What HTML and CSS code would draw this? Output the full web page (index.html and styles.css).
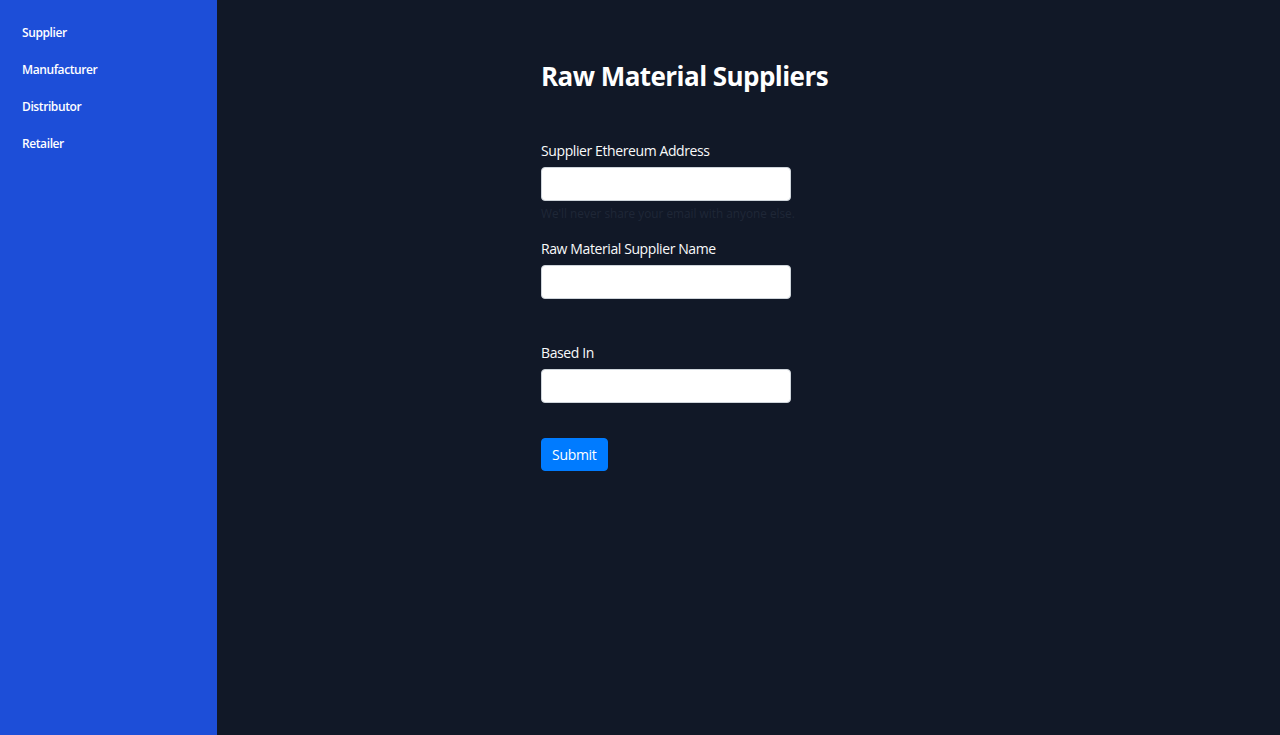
FILE: index.html
```html
<!DOCTYPE html>
<html lang="en">
<head>
<meta charset="utf-8">
<title>Raw Material Suppliers</title>
<link rel="stylesheet" href="styles.css">
</head>
<body>
<div class="layout">
  <nav class="sidebar">
    <a class="nav-link" href="#">Supplier</a>
    <a class="nav-link" href="#">Manufacturer</a>
    <a class="nav-link" href="#">Distributor</a>
    <a class="nav-link" href="#">Retailer</a>
  </nav>
  <main class="main">
    <div class="content">
      <h1 class="title">Raw Material Suppliers</h1>
      <form class="form">
        <div class="group">
          <label class="label">Supplier Ethereum Address</label>
          <input class="input" type="text">
          <small class="help">We'll never share your email with anyone else.</small>
        </div>
        <div class="group group-tall">
          <label class="label">Raw Material Supplier Name</label>
          <input class="input" type="text">
        </div>
        <div class="group group-btn">
          <label class="label">Based In</label>
          <input class="input" type="text">
        </div>
        <button class="btn" type="button">Submit</button>
      </form>
    </div>
  </main>
</div>
</body>
</html>
```

FILE: styles.css
```css
* { box-sizing: border-box; }
html, body { margin: 0; padding: 0; height: 100%; }
body {
  font-family: "Open Sans", "Noto Sans", "Liberation Sans", sans-serif;
  background: #111827;
  color: #f9fafb;
}
.layout {
  display: flex;
  min-height: 735px;
}
.sidebar {
  width: 217px;
  flex-shrink: 0;
  background: #1d4ed8;
  display: flex;
  flex-direction: column;
  padding: 24px 0 0 22px;
  gap: 19px;
}
.nav-link {
  color: #ffffff;
  text-decoration: none;
  font-size: 12px;
  font-weight: 600;
  line-height: 18px;
  letter-spacing: -0.4px;
}
.main {
  flex: 1;
  padding-left: 324px;
}
.content {
  width: 320px;
}
.title {
  margin: 58px 0 0 0;
  font-size: 26px;
  font-weight: 700;
  line-height: 36px;
  letter-spacing: -0.55px;
  color: #ffffff;
  white-space: nowrap;
}
.form {
  margin-top: 46px;
  display: flex;
  flex-direction: column;
}
.group {
  display: flex;
  flex-direction: column;
  margin-bottom: 16px;
}
.group-tall { margin-bottom: 43px; }
.group-btn { margin-bottom: 35px; }
.label {
  font-size: 14px;
  line-height: 21px;
  margin-bottom: 6px;
  letter-spacing: -0.4px;
  color: #f9fafb;
}
.input {
  width: 250px;
  height: 34px;
  border: 1px solid #ced4da;
  border-radius: 4px;
  background: #ffffff;
  padding: 6px 10px;
  font-size: 14px;
  font-family: inherit;
}
.help {
  margin-top: 4px;
  font-size: 11.8px;
  line-height: 17px;
  color: #1f2737;
  white-space: nowrap;
}
.btn {
  align-self: flex-start;
  height: 33px;
  padding: 0 10px;
  background: #007bff;
  color: #ffffff;
  border: 1px solid #007bff;
  border-radius: 4px;
  font-size: 14px;
  font-family: inherit;
  line-height: 21px;
  letter-spacing: -0.3px;
}
```
